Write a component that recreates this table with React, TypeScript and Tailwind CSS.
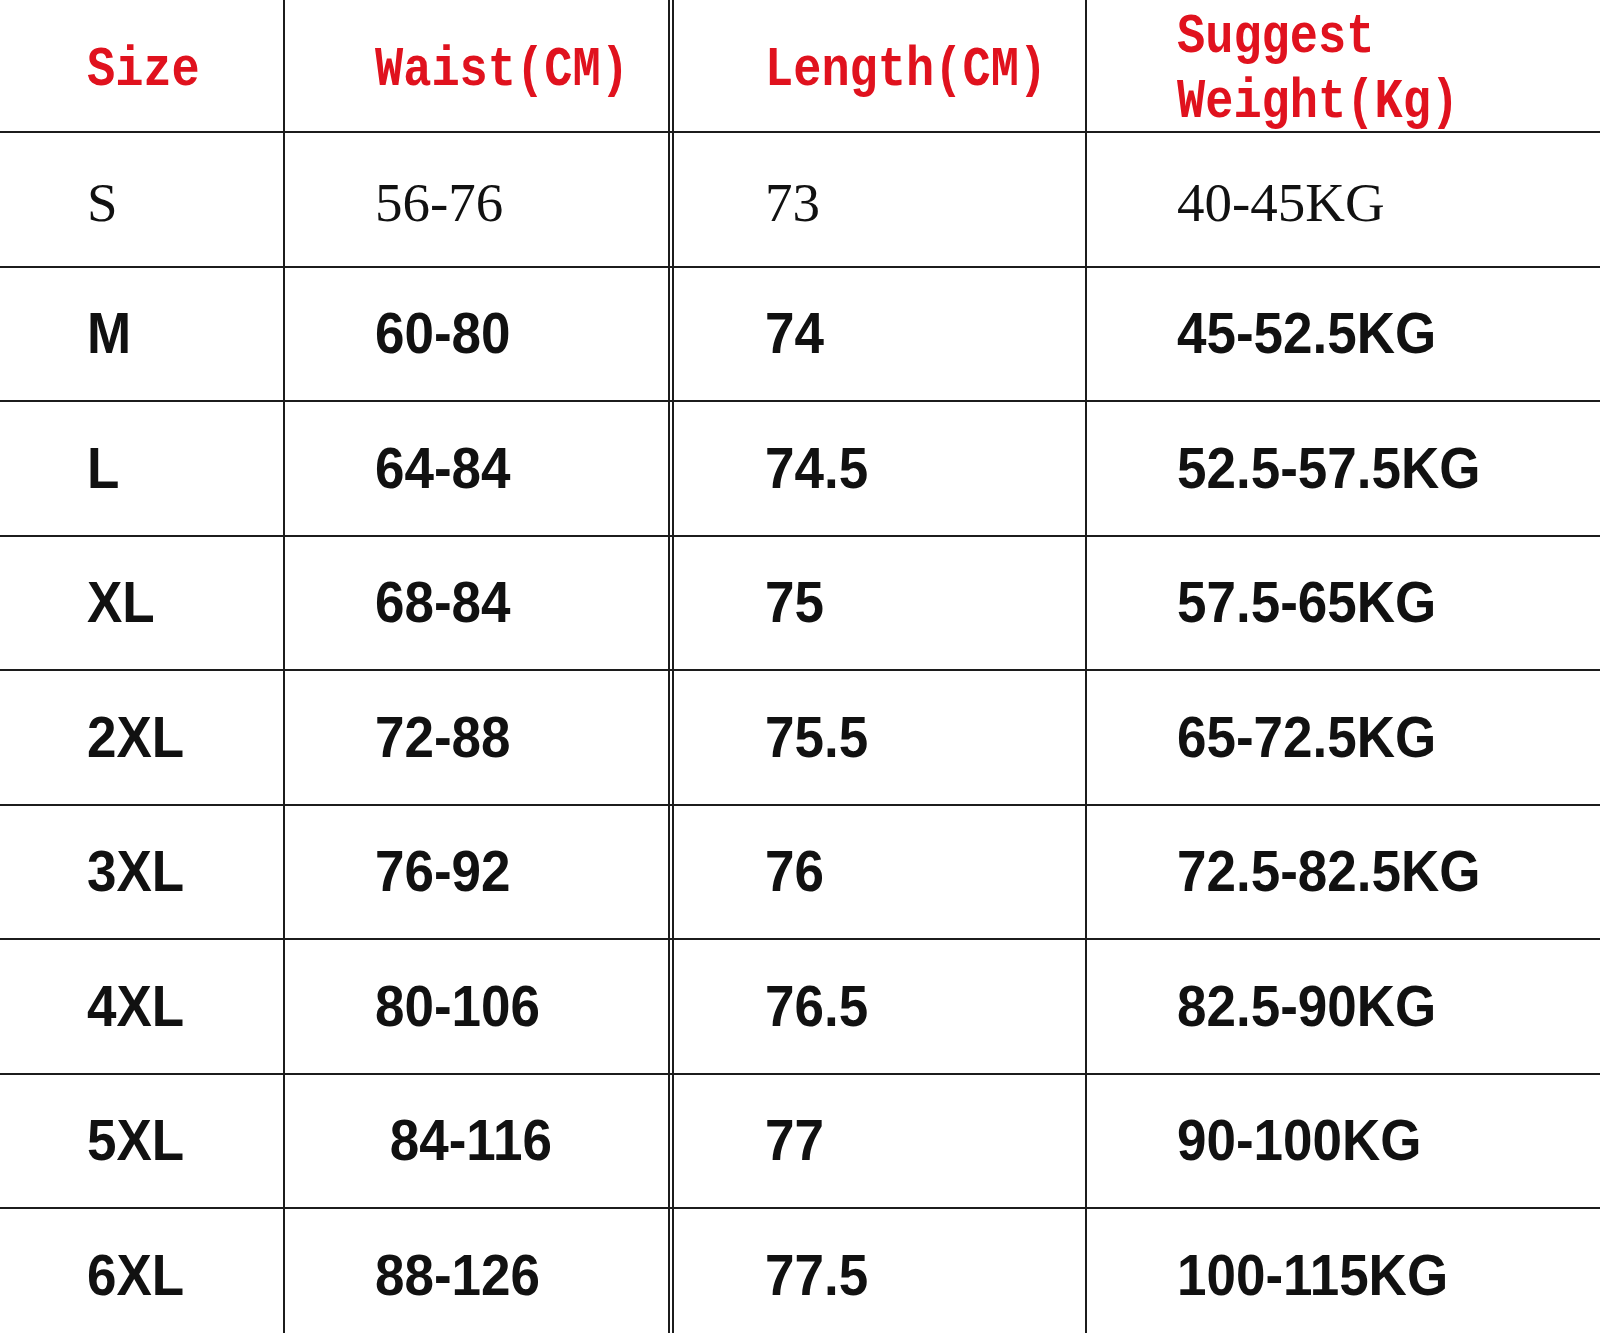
const HEADERS = ['Size', 'Waist(CM)', 'Length(CM)'];

const ROWS: string[][] = [
  ['M', '60-80', '74', '45-52.5KG'],
  ['L', '64-84', '74.5', '52.5-57.5KG'],
  ['XL', '68-84', '75', '57.5-65KG'],
  ['2XL', '72-88', '75.5', '65-72.5KG'],
  ['3XL', '76-92', '76', '72.5-82.5KG'],
  ['4XL', '80-106', '76.5', '82.5-90KG'],
  ['5XL', ' 84-116', '77', '90-100KG'],
  ['6XL', '88-126', '77.5', '100-115KG'],
];

const CELL = [
  'border-r-2 border-[#1c1c1c] pl-[87px]',
  'border-r-[6px] border-double border-[#1c1c1c] pl-[90px]',
  'border-r-2 border-[#1c1c1c] pl-[91px]',
  'pl-[90px]',
];

const ROW = 'grid grid-cols-[285px_389px_413px_1fr] border-b-2 border-[#1c1c1c]';

function HeadText({ children }: { children: React.ReactNode }) {
  return (
    <span className="inline-block origin-center scale-y-[1.2] whitespace-pre font-['Liberation_Mono',monospace] text-[47px] font-bold leading-[65px] text-[#e0121e]">
      {children}
    </span>
  );
}

export default function App() {
  return (
    <div className="h-[1333px] w-[1600px] overflow-hidden bg-white text-[#111]">
      <div className={`${ROW} h-[133px]`}>
        {HEADERS.map((h, i) => (
          <div key={h} className={`flex items-center pt-[5px] ${CELL[i]}`}>
            <HeadText>{h}</HeadText>
          </div>
        ))}
        <div className={`flex flex-col justify-center pt-[4px] ${CELL[3]}`}>
          <HeadText>Suggest</HeadText>
          <HeadText>Weight(Kg)</HeadText>
        </div>
      </div>

      <div className={`${ROW} h-[134.5px]`}>
        {['S', '56-76', '73', '40-45KG'].map((v, i) => (
          <div key={i} className={`flex items-center pt-[6px] ${CELL[i]}`}>
            <span className="font-['Liberation_Serif',serif] text-[55px] leading-none">{v}</span>
          </div>
        ))}
      </div>

      {ROWS.map((row) => (
        <div key={row[0]} className={`${ROW} h-[134.5px]`}>
          {row.map((v, i) => (
            <div key={i} className={`flex items-center ${CELL[i]}`}>
              <span className="inline-block origin-left scale-x-[0.93] whitespace-pre font-['Liberation_Sans',Arial,sans-serif] text-[57px] font-bold leading-none">
                {v}
              </span>
            </div>
          ))}
        </div>
      ))}
    </div>
  );
}
